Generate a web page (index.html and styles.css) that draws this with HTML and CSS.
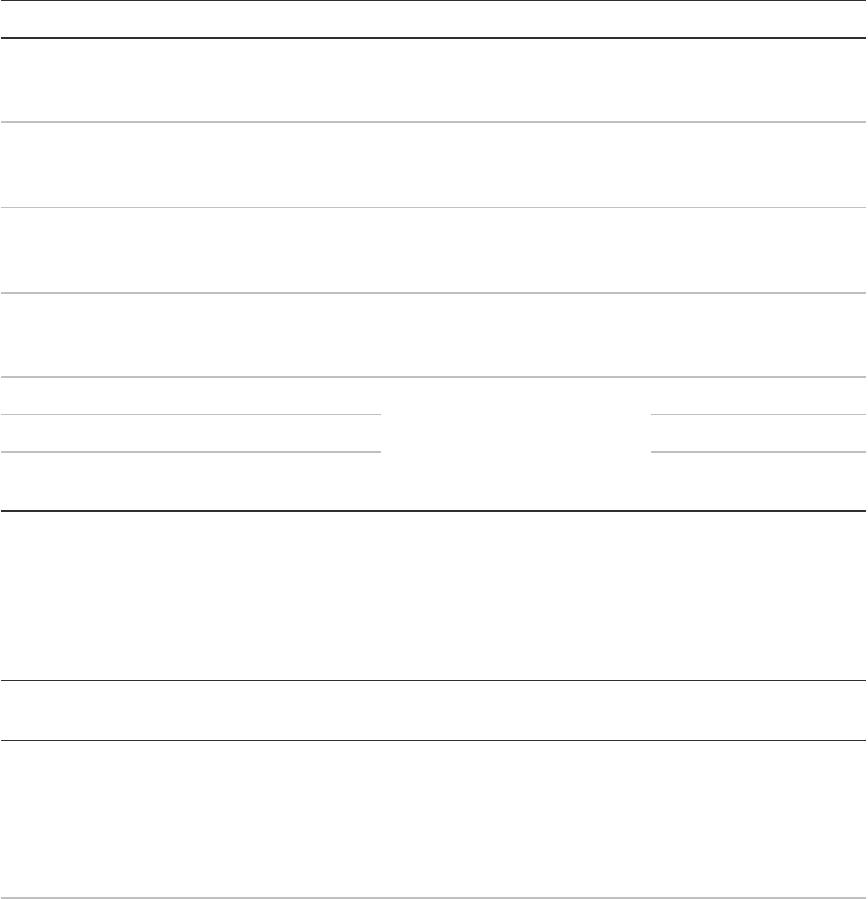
FILE: index.html
```html
<!DOCTYPE html>
<html>
<head>
<meta charset="utf-8">
<link rel="stylesheet" href="styles.css">
</head>
<body>
<div class="page">
  <div class="band h37 dark1"></div>
  <div class="band h84 dark2"></div>
  <div class="band h86 gray2"></div>
  <div class="band h85 gray1"></div>
  <div class="band h84 gray2"></div>
  <div class="band h38 gray2"></div>
  <div class="split h37">
    <div class="cell left gray1"></div>
    <div class="cell right gray1"></div>
  </div>
  <div class="split h59">
    <div class="cell left gray2"></div>
    <div class="cell right gray2"></div>
  </div>
  <div class="band h170 dark2"></div>
  <div class="band h60 dark1"></div>
  <div class="band h157 dark1"></div>
  <div class="band h2 gray2"></div>
</div>
</body>
</html>
```

FILE: styles.css
```css
html, body {
  margin: 0;
  padding: 0;
  background: #ffffff;
  font-family: "Liberation Sans", Arial, sans-serif;
}
.page {
  width: 865px;
  margin-left: 1px;
  display: flex;
  flex-direction: column;
}
.band, .split, .cell {
  box-sizing: border-box;
}
.split {
  display: flex;
  justify-content: space-between;
}
.cell { height: 100%; }
.left { width: 380px; }
.right { width: 215px; }
.dark1 { border-top: 1px solid #2f2f2f; }
.dark2 { border-top: 2px solid #2f2f2f; }
.gray1 { border-top: 1px solid #c0c0c0; }
.gray2 { border-top: 2px solid #c0c0c0; }
.h2 { height: 2px; }
.h37 { height: 37px; }
.h38 { height: 38px; }
.h59 { height: 59px; }
.h60 { height: 60px; }
.h84 { height: 84px; }
.h85 { height: 85px; }
.h86 { height: 86px; }
.h157 { height: 157px; }
.h170 { height: 170px; }
```
